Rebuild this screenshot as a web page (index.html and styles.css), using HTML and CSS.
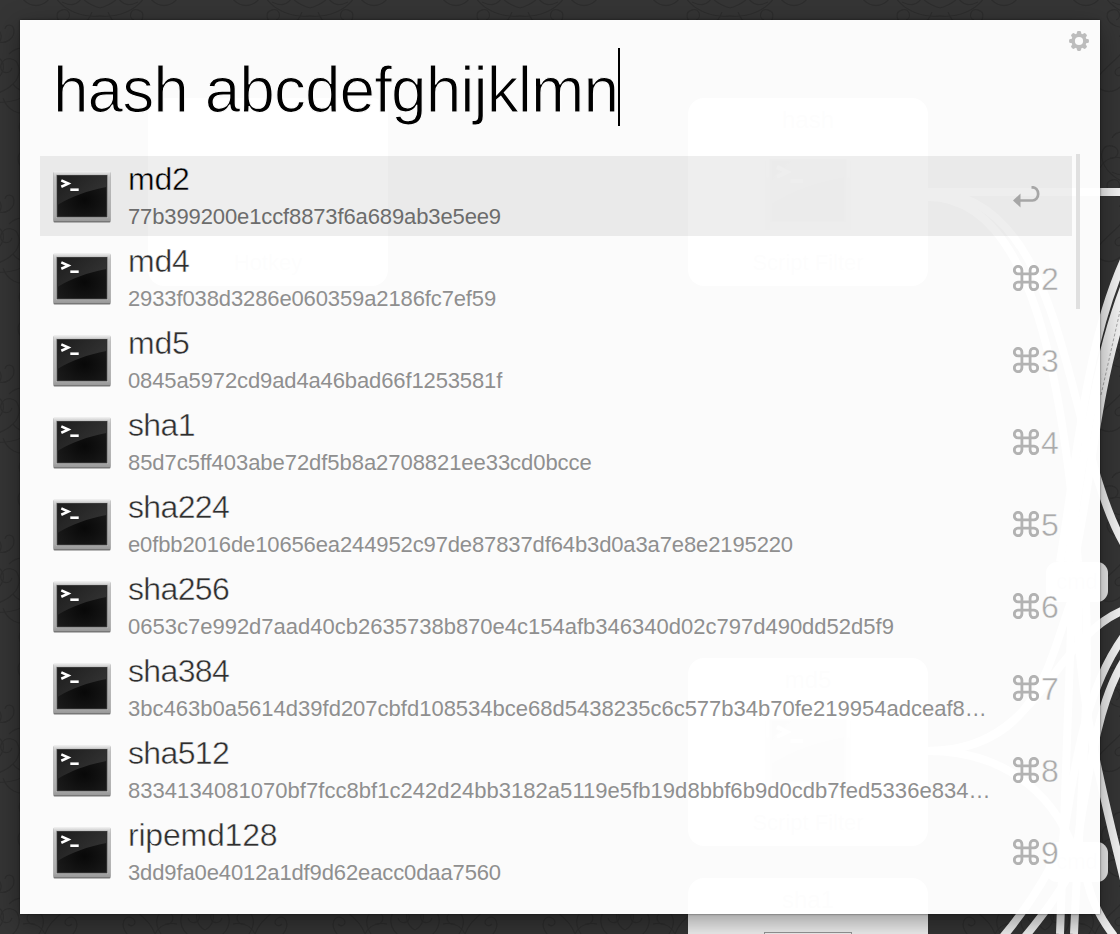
FILE: index.html
```html
<!DOCTYPE html>
<html lang="en">
<head>
<meta charset="utf-8">
<title>Launcher</title>
<link rel="stylesheet" href="styles.css">
</head>
<body>
<svg class="defs" width="0" height="0" aria-hidden="true">
  <defs>
    <linearGradient id="frame" x1="0" y1="0" x2="0" y2="1"><stop offset="0" stop-color="#e6e6e6"/><stop offset=".12" stop-color="#c4c4c4"/><stop offset=".9" stop-color="#aaa"/><stop offset="1" stop-color="#999"/></linearGradient>
    <linearGradient id="gloss" x1="0" y1="0" x2="1" y2=".6"><stop offset="0" stop-color="#1d1d1d"/><stop offset="1" stop-color="#343434"/></linearGradient>
    <radialGradient id="glass" cx=".55" cy=".6" r=".7"><stop offset="0" stop-color="#080808"/><stop offset="1" stop-color="#1c1c1c"/></radialGradient>
    <symbol id="terminal" viewBox="0 0 58 52">
      <rect x=".5" y="1" width="57" height="50.5" rx="1" fill="#777"/>
      <rect x=".5" y=".3" width="57" height="49.8" rx="1" fill="url(#frame)"/>
      <rect x="1" y=".3" width="56" height="1" fill="#f0f0f0"/>
      <rect x="3" y="3.5" width="52" height="43.5" fill="#bdbdbd"/>
      <rect x="3.7" y="4" width="50.6" height="42.3" fill="#3a3a3a"/>
      <rect x="4.6" y="5" width="48.8" height="40.4" fill="url(#glass)"/>
      <path d="M4.6 5H53.4V16C34 20 19 25 4.6 34Z" fill="url(#gloss)"/>
      <path d="M8.3 9.4 15.3 12.6 8.3 15.8" fill="none" stroke="#fff" stroke-width="2.6"/>
      <path d="M17.3 18.7H25.7" stroke="#fff" stroke-width="2.6"/>
    </symbol>
    <symbol id="command" viewBox="0 0 26 26">
      <path d="M8.9 8.9V5A3.8 3.8 0 1 0 5 8.9H21A3.8 3.8 0 1 0 17.1 5V21A3.8 3.8 0 1 0 21 17.1H5A3.8 3.8 0 1 0 8.9 21Z" fill="none" stroke="#b2b2b2" stroke-width="2.8"/>
    </symbol>
  </defs>
</svg>

<main class="desktop">
  <div class="workflow">
    <svg class="wires" viewBox="0 0 1120 934">
      <defs>
        <g id="scroll" fill="none" stroke="#292929" stroke-width="1.3">
          <path d="M0 44C14 40 26 30 24 18S8 6 6 15s9 10 11 3"/>
          <path d="M0 30C8 26 12 14 4 8S-4-6 0-14"/>
          <path d="M0 52c18 2 36-6 44-18s4-24-6-22-6 14 2 12"/>
          <path d="M8 48c4 12 16 18 26 14s12-14 4-16-10 8-4 10"/>
          <path d="M14 4c8-8 20-8 24 0M28 24c10-2 18 2 22 10M18 34c6 8 12 8 20 4"/>
          <path d="M0-4c7-4 8-12 3-17M4-8c8 2 15-4 15-11s-8-8-9-2"/>
          <path d="M50 34c8 10 20 10 28 0s2-20-5-16 0 11 4 6M50 34c4-12 14-18 24-28s8-20 0-20"/>
        </g>
        <g id="motif"><use href="#scroll"/><use href="#scroll" transform="scale(-1 1)"/></g>
        <pattern id="damask" width="210" height="170" patternUnits="userSpaceOnUse">
          <use href="#motif" transform="translate(100 -36)"/>
          <use href="#motif" transform="translate(100 134)"/>
          <use href="#motif" transform="translate(-5 50)"/>
          <use href="#motif" transform="translate(205 50)"/>
        </pattern>
      </defs>
      <rect width="1120" height="934" fill="#353535"/>
      <rect width="1120" height="934" fill="url(#damask)" opacity=".7"/>
      <g fill="none" stroke="#f2f2f2" stroke-width="8">
        <path d="M928 192H1120"/>
        <path d="M928 197C1030 197 1062 370 1078 562"/>
        <path d="M928 192C1070 192 1064 440 1124 544"/>
        <path d="M1060 562C1078 450 1086 345 1124 260"/>
        <path d="M1068 562C1082 470 1092 370 1125 285"/>
        <path d="M1074 562C1092 480 1094 400 1124 308"/>
        <path d="M928 751C1050 750 1050 640 1080 580"/>
        <path d="M928 751C1040 751 1050 640 1124 610"/>
        <path d="M928 751C1010 751 1060 800 1078 862"/>
        <path d="M1078 602C1076 700 1110 820 1124 880"/>
        <path d="M1060 862C1075 760 1085 690 1124 636"/>
        <path d="M1074 862C1088 780 1096 705 1124 661"/>
        <path d="M1072 602 1060 934M1086 602C1090 700 1080 800 1074 934"/>
        <path d="M1064 840C1046 880 1024 912 1002 938M1076 862C1062 890 1044 914 1024 938M1084 862C1088 895 1098 915 1114 936"/>
      </g>
      <path d="M1101 395 1120 311" fill="none" stroke="#888" stroke-width=".7" stroke-dasharray="3 2"/>
    </svg>
    <div class="node node-hotkey"><span></span><span>Hotkey</span></div>
    <div class="node node-hash"><span>hash</span><svg class="node-icon"><use href="#terminal"/></svg><span>Script Filter</span></div>
    <div class="node node-md5"><span>md5</span><svg class="node-icon"><use href="#terminal"/></svg><span>Script Filter</span></div>
    <div class="node node-sha1"><span>sha1</span><i class="node-frame"></i></div>
    <div class="pill pill-upper">cmd</div>
    <div class="pill pill-lower">cmd</div>
  </div>

  <section class="panel">
    <svg class="gear" viewBox="-10 -10 20 20">
      <g fill="#bdbdbd"><rect x="-2.1" y="-9.9" width="4.2" height="19.8" rx="1.4"/><rect x="-2.1" y="-9.9" width="4.2" height="19.8" rx="1.4" transform="rotate(45)"/><rect x="-2.1" y="-9.9" width="4.2" height="19.8" rx="1.4" transform="rotate(90)"/><rect x="-2.1" y="-9.9" width="4.2" height="19.8" rx="1.4" transform="rotate(135)"/><circle r="7.7"/></g>
      <circle r="4.1" fill="#fcfcfc"/>
    </svg>
    <div class="query"><span class="query-text">hash abcdefghijklmn</span><i class="caret"></i></div>
    <div class="results">
      <ul class="list">
        <li class="row selected"><svg class="icon"><use href="#terminal"/></svg><div class="text"><b>md2</b><p>77b399200e1ccf8873f6a689ab3e5ee9</p></div>
          <svg class="return" viewBox="0 0 27 22"><path d="M18.5 1.3H19.5A5.5 6.4 0 0 1 19.5 14.5H7" fill="none" stroke="#a6a6a6" stroke-width="2.7"/><path d="M0 14.5 7.5 7.5V21.5Z" fill="#a6a6a6"/></svg></li>
        <li class="row"><svg class="icon"><use href="#terminal"/></svg><div class="text"><b>md4</b><p>2933f038d3286e060359a2186fc7ef59</p></div><div class="key"><svg><use href="#command"/></svg><span>2</span></div></li>
        <li class="row"><svg class="icon"><use href="#terminal"/></svg><div class="text"><b>md5</b><p>0845a5972cd9ad4a46bad66f1253581f</p></div><div class="key"><svg><use href="#command"/></svg><span>3</span></div></li>
        <li class="row sha snug"><svg class="icon"><use href="#terminal"/></svg><div class="text"><b>sha1</b><p>85d7c5ff403abe72df5b8a2708821ee33cd0bcce</p></div><div class="key"><svg><use href="#command"/></svg><span>4</span></div></li>
        <li class="row sha"><svg class="icon"><use href="#terminal"/></svg><div class="text"><b>sha224</b><p>e0fbb2016de10656ea244952c97de87837df64b3d0a3a7e8e2195220</p></div><div class="key"><svg><use href="#command"/></svg><span>5</span></div></li>
        <li class="row sha wide"><svg class="icon"><use href="#terminal"/></svg><div class="text"><b>sha256</b><p>0653c7e992d7aad40cb2635738b870e4c154afb346340d02c797d490dd52d5f9</p></div><div class="key"><svg><use href="#command"/></svg><span>6</span></div></li>
        <li class="row sha wide"><svg class="icon"><use href="#terminal"/></svg><div class="text"><b>sha384</b><p>3bc463b0a5614d39fd207cbfd108534bce68d5438235c6c577b34b70fe219954adceaf8…</p></div><div class="key"><svg><use href="#command"/></svg><span>7</span></div></li>
        <li class="row sha wider"><svg class="icon"><use href="#terminal"/></svg><div class="text"><b>sha512</b><p>8334134081070bf7fcc8bf1c242d24bb3182a5119e5fb19d8bbf6b9d0cdb7fed5336e834…</p></div><div class="key"><svg><use href="#command"/></svg><span>8</span></div></li>
        <li class="row"><svg class="icon"><use href="#terminal"/></svg><div class="text"><b>ripemd128</b><p>3dd9fa0e4012a1df9d62eacc0daa7560</p></div><div class="key"><svg><use href="#command"/></svg><span>9</span></div></li>
      </ul>
      <div class="scrollbar"></div>
    </div>
  </section>
</main>
</body>
</html>
```
FILE: styles.css
```css
* { box-sizing: border-box; }
html, body { margin: 0; height: 100%; overflow: hidden; }
body { background: #333; font-family: "Liberation Sans", Arial, sans-serif; }
.defs { position: absolute; }

.desktop { position: relative; width: 1120px; height: 934px; padding: 20px; overflow: hidden; }
.workflow { position: absolute; inset: 0; }
.wires { display: block; width: 1120px; height: 934px; }

/* Nodes on the free canvas */
.node {
  position: absolute; width: 240px; height: 188px; padding: 8px 0 9px;
  display: flex; flex-direction: column; align-items: center; justify-content: space-between;
  border-radius: 16px; background: #f4f4f4; color: #888; font-size: 24px; line-height: 28px;
}
.node span:last-child { font-size: 22px; }
.node-icon { width: 88px; height: 78px; opacity: .55; }
.node-hotkey { left: 148px; top: 98px; }
.node-hash { left: 688px; top: 98px; }
.node-md5 { left: 688px; top: 658px; }
.node-sha1 { left: 688px; top: 878px; height: 80px; }
.node-frame { width: 88px; height: 9px; border: 1px solid #999; border-bottom: 0; background: #f6f6f6; margin-bottom: 8px; }
.pill {
  position: absolute; left: 1046px; width: 62px; height: 40px; border-radius: 11px;
  background: #eee; color: #aaa; font-size: 22px; line-height: 40px; text-align: center;
}
.pill-upper { top: 562px; }
.pill-lower { top: 842px; }

.panel {
  position: relative; width: 1080px; height: 894px; padding: 28px 20px 0;
  background: rgba(255, 255, 255, .98);
  box-shadow: 0 0 2px rgba(0, 0, 0, .6), 0 8px 26px rgba(0, 0, 0, .4);
}
.gear { position: absolute; top: 11px; right: 11px; width: 20px; height: 20px; }

.query { display: flex; height: 78px; padding-left: 13px; }
.query-text {
  font-size: 64px; line-height: 84px; letter-spacing: -.97px; color: #000;
  -webkit-text-stroke: 1.2px #fcfcfc; white-space: nowrap;
}
.caret { width: 2px; height: 78px; background: #000; }

.results { display: flex; gap: 4px; margin-top: 28px; }
.list { list-style: none; width: 1032px; margin: 2px 0 0; padding: 0; display: grid; gap: 2px; }
.row { display: flex; align-items: flex-start; height: 80px; padding: 0 12px 0 13px; color: #2e2e2e; -webkit-text-stroke: .45px #fcfcfc; }
.icon { width: 58px; height: 52px; margin-top: 15px; }
.text { flex: 1; min-width: 0; margin-left: 17px; }
.text b { display: block; height: 43px; font-weight: 400; font-size: 32px; line-height: 46px; letter-spacing: -.2px; }
.text p { margin: 0; font-size: 22px; line-height: 36px; letter-spacing: -.12px; white-space: nowrap; color: #8f8f8f; -webkit-text-stroke: 0; }
.sha b { letter-spacing: -.65px; }
.snug p { letter-spacing: -.05px; }
.wide p { letter-spacing: 0; }
.wider p { letter-spacing: .04px; }
.selected { background: rgba(0, 0, 0, .067); color: #000; -webkit-text-stroke-color: #ebebeb; }
.selected p { color: #6c6c6c; }

.key { display: flex; gap: 2px; margin-top: 27px; color: #aaa; font-size: 32px; line-height: 32px; }
.key svg { width: 26px; height: 26px; }
.key span { width: 19px; margin-top: -2px; }
.return { width: 27px; height: 22px; margin: 30px 20px 0 0; }
.scrollbar { width: 4px; height: 155px; background: #e0e0e0; }
```
